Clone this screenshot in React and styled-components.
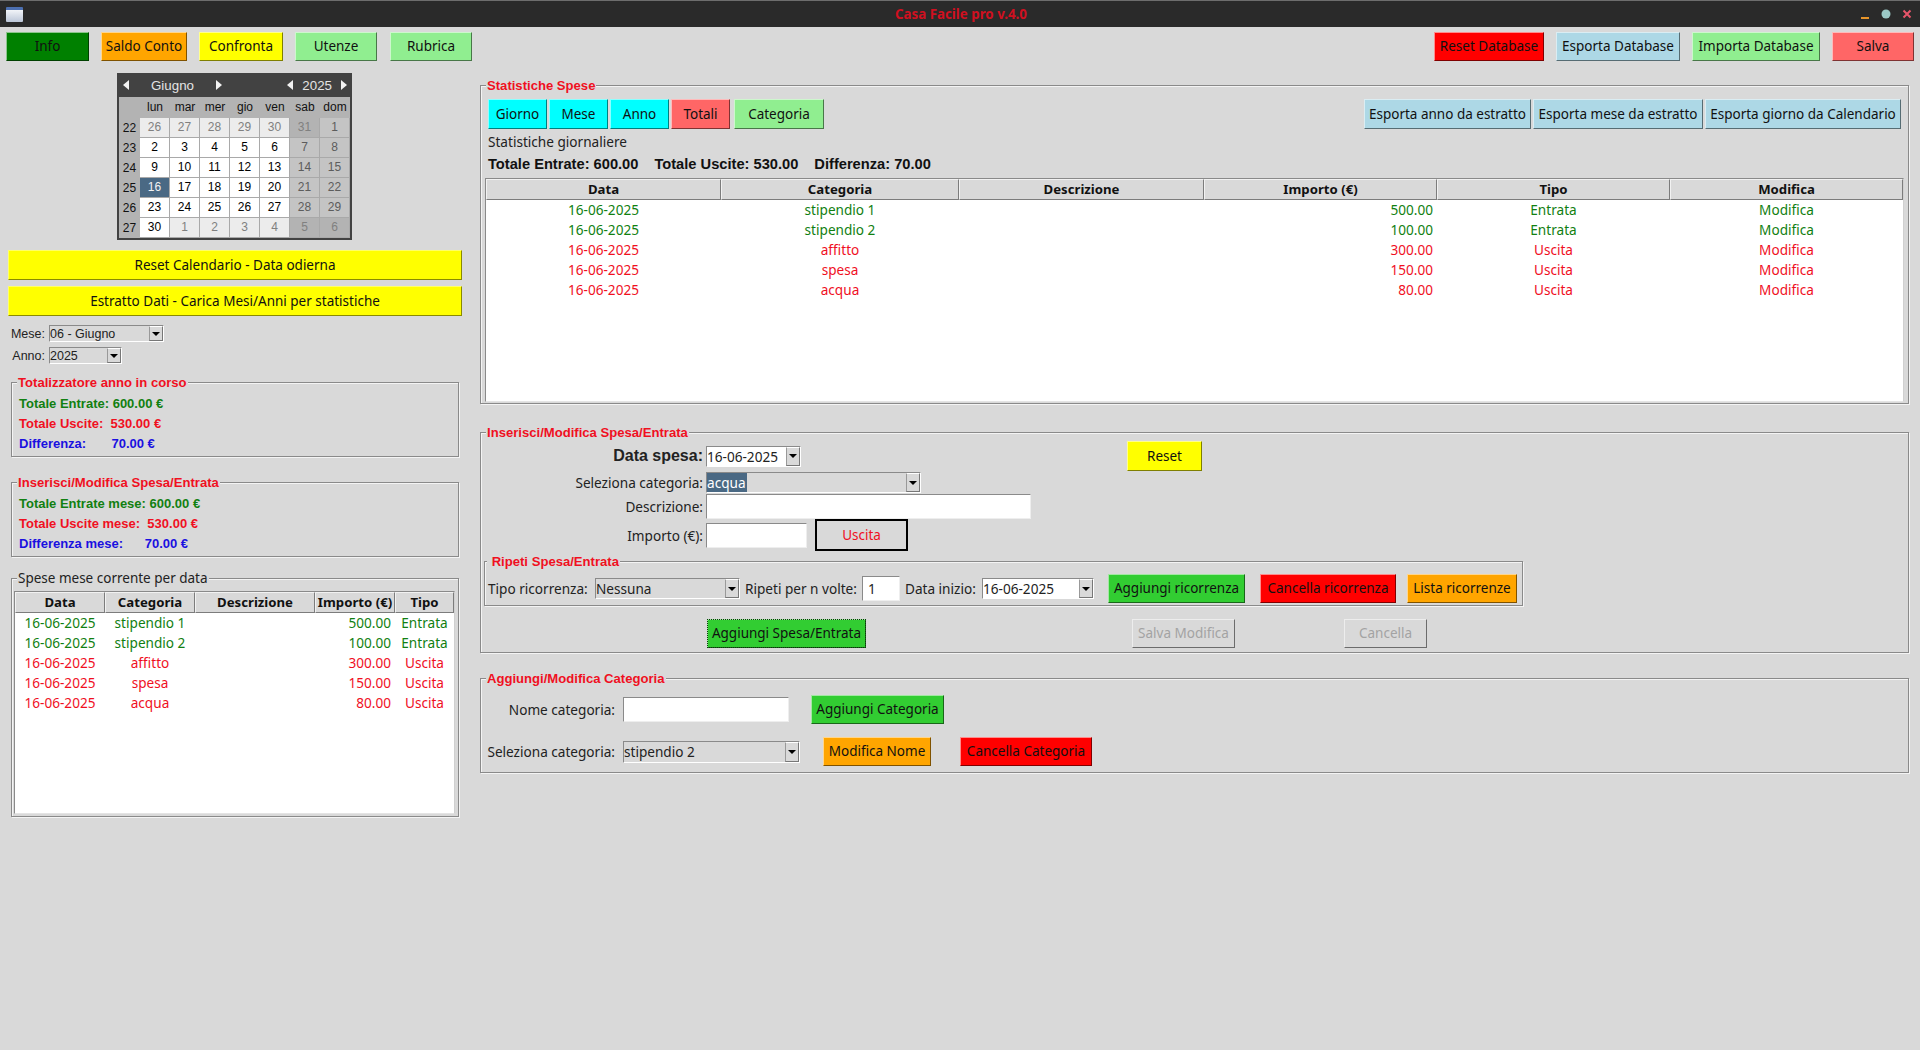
import React from "react";
import styled, { createGlobalStyle } from "styled-components";

const GREEN = "#118011";
const RED = "#f0101f";
const SANS = '"Noto Sans", sans-serif';
const ARIAL = '"Liberation Sans", Arial, sans-serif';

const Global = createGlobalStyle`
  html, body { margin: 0; padding: 0; background: #d9d9d9; }
  * { box-sizing: border-box; }
`;

const Page = styled.div`
  width: 1920px; height: 1050px; overflow: hidden; background: #d9d9d9;
  font-family: ${SANS}; font-size: 13.6px; color: #111;
`;
const TitleBar = styled.div`
  height: 27px; background: #2a2a2a; border-top: 1px solid #6d6d6d;
  display: flex; align-items: center; justify-content: space-between; padding: 0 6px; position: relative;
`;
const WinIcon = styled.div`
  width: 17px; height: 15px; border-radius: 1px;
  background: linear-gradient(#4c6fb0 0 3px, #f2f4f8 3px, #bcc6d8 100%);
`;
const Title = styled.div`
  position: absolute; left: 895px; top: 4px; font: bold 13.33px ${SANS}; color: #d01020;
`;
const Toolbar = styled.div`
  height: 39px; padding: 5px 6px 5px; display: flex; justify-content: space-between;
`;
const Group = styled.div`display: flex; gap: ${p => p.$gap || 12}px;`;
const Btn = styled.div`
  width: ${p => p.$w}px; height: ${p => p.$h || 29}px; flex: none;
  margin-left: ${p => p.$ml || 0}px;
  background: ${p => p.$bg || "#d9d9d9"};
  border: 1px solid; border-color: rgba(255,255,255,.55) rgba(0,0,0,.5) rgba(0,0,0,.5) rgba(255,255,255,.55);
  display: flex; align-items: center; justify-content: center;
  padding-bottom: ${p => (p.$h >= 30 ? 1 : 2)}px;
  font: 13.5px ${SANS}; color: ${p => p.$color || "#111"}; white-space: nowrap;
`;
const FocusBtn = styled(Btn)`
  outline: 1px dotted #0a3a0a; outline-offset: -1px;
`;
const OutlineBtn = styled(Btn)`
  border: 2px solid #000; height: 32px;
`;
const Main = styled.div`display: grid; grid-template-columns: 479px 1fr;`;
const Left = styled.div`display: flex; flex-direction: column; align-items: flex-start;`;
const Right = styled.div`display: flex; flex-direction: column; align-items: flex-start; padding-top: 19px;`;

const Cal = styled.div`
  margin: 7px 0 0 117px; width: 235px; height: 167px; background: #424242; padding: 0 2px 2px;
`;
const CalHead = styled.div`
  height: 24px; display: flex; align-items: center; color: #e4e4e4; font: 13.33px ${ARIAL};
`;
const CalMonth = styled.div`display: flex; align-items: center; justify-content: space-between; width: 103px; padding: 0 0 0 4px;`;
const CalYear = styled.div`display: flex; align-items: center; gap: 9px; margin-left: auto; padding-right: 3px;`;
const Arrow = styled.span`
  width: 0; height: 0; border-top: 5px solid transparent; border-bottom: 5px solid transparent;
  ${p => p.$dir === "l" ? "border-right: 6px solid #f2f2f2;" : "border-left: 6px solid #f2f2f2;"}
`;
const CalGrid = styled.div`
  display: grid; grid-template-columns: 21px repeat(7, 30px); grid-template-rows: 21px repeat(6, 20px);
  background: #b3b3b3; font: 12px ${ARIAL};
`;
const CalLabel = styled.div`display: flex; align-items: center; justify-content: center; color: #111; padding-bottom: ${p => p.$pb || 0}px;`;
const CalDay = styled.div`
  display: flex; align-items: center; justify-content: center; padding-bottom: 2px;
  background: ${p => p.$bg}; color: ${p => p.$color};
  border-right: 1px solid #a9a9a9; border-bottom: 1px solid #a9a9a9;
`;

const WideBtn = styled(Btn)`margin: ${p => p.$mt}px 0 0 8px; border-color: #ffff66 #8a8a00 #8a8a00 #ffff66;`;
const FieldRow = styled.div`
  display: flex; align-items: center; height: 17px; margin-top: ${p => p.$mt}px; font: 12.5px ${ARIAL}; color: #222;
`;
const FieldLabel = styled.div`width: 45px; text-align: right; margin-right: 4px;`;
const Combo = styled.div`
  width: ${p => p.$w}px; height: ${p => p.$h || 21}px; flex: none; margin-left: ${p => p.$ml || 0}px;
  display: flex; align-items: center; justify-content: space-between;
  background: ${p => p.$white ? "#fff" : "#d9d9d9"};
  border: 1px solid; border-color: #8a8a8a #fff #fff #8a8a8a;
  padding-left: 0; font: ${p => p.$arial ? `12.5px ${ARIAL}` : `13.6px ${SANS}`}; color: #222;
`;
const ComboBtn = styled.div`
  width: 14px; height: 100%; flex: none; background: #d9d9d9;
  border: 1px solid; border-color: #fff #777 #777 #999;
  display: flex; align-items: center; justify-content: center;
  &::after { content: ""; border-left: 4px solid transparent; border-right: 4px solid transparent; border-top: 4px solid #000; }
`;
const Selected = styled.span`background: #4a6984; color: #fff; padding: 0 1px 0 0;`;
const Entry = styled.div`
  width: ${p => p.$w}px; height: ${p => p.$h || 25}px; flex: none; margin-left: ${p => p.$ml || 0}px;
  background: #fff; border: 1px solid; border-color: #8a8a8a #eee #eee #8a8a8a;
  padding-left: 5px; display: flex; align-items: center; font: 13.6px ${SANS}; color: #222;
`;

const Frame = styled.div`
  position: relative; flex: none;
  width: ${p => p.$w}px; height: ${p => p.$h}px;
  margin: ${p => p.$m || 0};
  border: 1px solid #8a8a8a;
  box-shadow: inset 1px 1px 0 #f4f4f4, 1px 1px 0 #f4f4f4;
  padding: ${p => p.$pad || 0};
`;
const Legend = styled.div`
  position: absolute; left: ${p => p.$l ?? 5}px; top: ${p => p.$plain ? -9 : -8}px; padding: 0 1px; background: #d9d9d9;
  font: ${p => p.$plain ? `13.5px/16px ${SANS}` : `bold 13.1px/16px ${ARIAL}`};
  color: ${p => p.$plain ? "#222" : RED}; white-space: pre;
`;
const Stat = styled.div`
  height: 20px; font: bold 13px/20px ${ARIAL}; color: ${p => p.$c}; white-space: pre;
`;

const Tree = styled.div`
  width: ${p => p.$w}px; height: ${p => p.$h}px; background: #fff; margin: ${p => p.$m || 0};
  border: 1px solid; border-color: #8a8a8a #d0d0d0 #e4e4e4 #8a8a8a;
  display: flex; flex-direction: column;
`;
const TreeRow = styled.div`
  display: grid; grid-template-columns: ${p => p.$cols}; height: ${p => p.$head ? 21 : 20}px; flex: none;
`;
const TH = styled.div`
  background: #d9d9d9; border: 1px solid; border-color: #f2f2f2 #7c7c7c #7c7c7c #f2f2f2;
  display: flex; align-items: center; justify-content: center; padding-bottom: 1px;
  font: bold 13.2px ${SANS}; color: #111; white-space: nowrap;
`;
const TD = styled.div`
  display: flex; align-items: center; padding: 0 ${p => p.$right ? 4 : 0}px 1px 0;
  justify-content: ${p => p.$right ? "flex-end" : "center"};
  font: 13.6px ${SANS}; color: ${p => p.$c}; white-space: nowrap;
`;

const Row = styled.div`display: flex; align-items: ${p => p.$align || "center"}; height: ${p => p.$h}px; margin-top: ${p => p.$mt || 0}px; padding-left: ${p => p.$pl || 0}px;`;
const RowLabel = styled.div`
  width: ${p => p.$w}px; flex: none; text-align: right; white-space: nowrap; padding-right: ${p => p.$pr ?? 3}px;
  font: ${p => p.$big ? `bold 16px ${ARIAL}` : `13.6px ${SANS}`}; color: #222;
`;
const Text = styled.div`
  width: ${p => p.$w ? `${p.$w}px` : "auto"}; flex: none;
  margin-left: ${p => p.$ml || 0}px; white-space: nowrap; color: #222; font: 13.6px ${SANS};
`;
const Caption = styled(Text)`margin-top: 3px; line-height: 20px;`;
const BoldTotals = styled.div`
  display: flex; gap: 16px; font: bold 14.67px ${ARIAL}; color: #111; height: 22px; align-items: center;
  margin: 1px 0 0 7px; white-space: nowrap;
`;
const ExportGroup = styled(Group)`margin-left: auto; margin-right: 7px;`;
const WinButtons = styled.svg`margin-right: 2px;`;

const rows = [
  ["16-06-2025", "stipendio 1", "500.00", "Entrata", GREEN],
  ["16-06-2025", "stipendio 2", "100.00", "Entrata", GREEN],
  ["16-06-2025", "affitto", "300.00", "Uscita", RED],
  ["16-06-2025", "spesa", "150.00", "Uscita", RED],
  ["16-06-2025", "acqua", "80.00", "Uscita", RED],
];

const weeks = [
  [22, [26,27,28,29,30,31,1]],
  [23, [2,3,4,5,6,7,8]],
  [24, [9,10,11,12,13,14,15]],
  [25, [16,17,18,19,20,21,22]],
  [26, [23,24,25,26,27,28,29]],
  [27, [30,1,2,3,4,5,6]],
];

function dayStyle(wi, di) {
  const weekend = di >= 5;
  const other = (wi === 0 && di < 6) || (wi === 5 && di > 0);
  if (wi === 3 && di === 0) return { bg: "#4a6984", color: "#f2f2f2" };
  if (other && weekend) return { bg: "#b3b3b3", color: "#808080" };
  if (other) return { bg: "#ececec", color: "#808080" };
  if (weekend) return { bg: "#c4c4c4", color: "#5c5c5c" };
  return { bg: "#fff", color: "#000" };
}

function Calendar() {
  return (
    <Cal>
      <CalHead>
        <CalMonth>
          <Arrow $dir="l" />
          <span>Giugno</span>
          <Arrow $dir="r" />
        </CalMonth>
        <CalYear>
          <Arrow $dir="l" />
          <span>2025</span>
          <Arrow $dir="r" />
        </CalYear>
      </CalHead>
      <CalGrid>
        <CalLabel />
        {["lun","mar","mer","gio","ven","sab","dom"].map(d => <CalLabel key={d} $pb={2}>{d}</CalLabel>)}
        {weeks.map(([w, days], wi) => (
          <React.Fragment key={w}>
            <CalLabel>{w}</CalLabel>
            {days.map((d, di) => {
              const s = dayStyle(wi, di);
              return <CalDay key={di} $bg={s.bg} $color={s.color}>{d}</CalDay>;
            })}
          </React.Fragment>
        ))}
      </CalGrid>
    </Cal>
  );
}

const leftCols = "90px 90px 120px 80px 1fr";
const rightCols = "235px 238px 245px 233px 233px 1fr";

function LeftTree() {
  return (
    <Tree $w={441} $h={223} $m="12px 0 0 2px">
      <TreeRow $head $cols={leftCols}>
        {["Data","Categoria","Descrizione","Importo (€)","Tipo"].map(h => <TH key={h}>{h}</TH>)}
      </TreeRow>
      {rows.map((r, i) => (
        <TreeRow key={i} $cols={leftCols}>
          <TD $c={r[4]}>{r[0]}</TD>
          <TD $c={r[4]}>{r[1]}</TD>
          <TD />
          <TD $c={r[4]} $right>{r[2]}</TD>
          <TD $c={r[4]}>{r[3]}</TD>
        </TreeRow>
      ))}
    </Tree>
  );
}

function RightTree() {
  return (
    <Tree $w={1419} $h={224} $m="3px 0 0 4px">
      <TreeRow $head $cols={rightCols}>
        {["Data","Categoria","Descrizione","Importo (€)","Tipo","Modifica"].map(h => <TH key={h}>{h}</TH>)}
      </TreeRow>
      {rows.map((r, i) => (
        <TreeRow key={i} $cols={rightCols}>
          <TD $c={r[4]}>{r[0]}</TD>
          <TD $c={r[4]}>{r[1]}</TD>
          <TD />
          <TD $c={r[4]} $right>{r[2]}</TD>
          <TD $c={r[4]}>{r[3]}</TD>
          <TD $c={r[4]}>Modifica</TD>
        </TreeRow>
      ))}
    </Tree>
  );
}

export default function App() {
  return (
    <Page>
      <Global />
      <TitleBar>
        <WinIcon />
        <Title>Casa Facile pro v.4.0</Title>
        <WinButtons width="58" height="14" viewBox="0 0 58 14">
          <rect x="7" y="10" width="8" height="2" fill="#e8952a" />
          <circle cx="32" cy="7" r="4.5" fill="#9cc9c6" />
          <path d="M49.5 3.5l7 7M56.5 3.5l-7 7" stroke="#e8556a" strokeWidth="2" />
        </WinButtons>
      </TitleBar>
      <Toolbar>
        <Group $gap={12}>
          <Btn $w={83} $bg="#008000">Info</Btn>
          <Btn $w={86} $bg="#ffa500">Saldo Conto</Btn>
          <Btn $w={84} $bg="#ffff00">Confronta</Btn>
          <Btn $w={82} $bg="#90ee90">Utenze</Btn>
          <Btn $w={82} $ml={1} $bg="#90ee90">Rubrica</Btn>
        </Group>
        <Group $gap={12}>
          <Btn $w={110} $bg="#ff0000">Reset Database</Btn>
          <Btn $w={124} $bg="#add8e6">Esporta Database</Btn>
          <Btn $w={128} $bg="#90ee90">Importa Database</Btn>
          <Btn $w={82} $bg="#ff6666">Salva</Btn>
        </Group>
      </Toolbar>
      <Main>
        <Left>
          <Calendar />
          <WideBtn $w={454} $h={30} $mt={10} $bg="#ffff00">Reset Calendario - Data odierna</WideBtn>
          <WideBtn $w={454} $h={30} $mt={6} $bg="#ffff00">Estratto Dati - Carica Mesi/Anni per statistiche</WideBtn>
          <FieldRow $mt={9}>
            <FieldLabel>Mese:</FieldLabel>
            <Combo $w={115} $h={17} $arial>06 - Giugno<ComboBtn /></Combo>
          </FieldRow>
          <FieldRow $mt={5}>
            <FieldLabel>Anno:</FieldLabel>
            <Combo $w={73} $h={17} $arial>2025<ComboBtn /></Combo>
          </FieldRow>
          <Frame $w={448} $h={75} $m="18px 0 0 11px" $pad="11px 0 0 7px">
            <Legend>Totalizzatore anno in corso</Legend>
            <Stat $c={GREEN}>Totale Entrate: 600.00 €</Stat>
            <Stat $c={RED}>Totale Uscite:  530.00 €</Stat>
            <Stat $c="#1a10e0">Differenza:       70.00 €</Stat>
          </Frame>
          <Frame $w={448} $h={75} $m="25px 0 0 11px" $pad="11px 0 0 7px">
            <Legend>Inserisci/Modifica Spesa/Entrata</Legend>
            <Stat $c={GREEN}>Totale Entrate mese: 600.00 €</Stat>
            <Stat $c={RED}>Totale Uscite mese:  530.00 €</Stat>
            <Stat $c="#1a10e0">Differenza mese:      70.00 €</Stat>
          </Frame>
          <Frame $w={448} $h={239} $m="21px 0 0 11px">
            <Legend $plain>Spese mese corrente per data</Legend>
            <LeftTree />
          </Frame>
        </Left>
        <Right>
          <Frame $w={1429} $h={319} $m="0 0 0 1px" $pad="13px 0 0 0">
            <Legend>Statistiche Spese</Legend>
            <Row $h={30} $pl={7} $align="flex-start">
              <Group $gap={2}>
                <Btn $w={59} $h={30} $bg="#00ffff">Giorno</Btn>
                <Btn $w={59} $h={30} $bg="#00ffff">Mese</Btn>
                <Btn $w={59} $h={30} $bg="#00ffff">Anno</Btn>
                <Btn $w={59} $h={30} $bg="#ff6666">Totali</Btn>
                <Btn $w={90} $h={30} $ml={2} $bg="#90ee90">Categoria</Btn>
              </Group>
              <ExportGroup $gap={2}>
                <Btn $w={167} $h={30} $bg="#add8e6">Esporta anno da estratto</Btn>
                <Btn $w={170} $h={30} $bg="#add8e6">Esporta mese da estratto</Btn>
                <Btn $w={196} $h={30} $bg="#add8e6">Esporta giorno da Calendario</Btn>
              </ExportGroup>
            </Row>
            <Caption $ml={7}>Statistiche giornaliere</Caption>
            <BoldTotals>
              <span>Totale Entrate: 600.00</span>
              <span>Totale Uscite: 530.00</span>
              <span>Differenza: 70.00</span>
            </BoldTotals>
            <RightTree />
          </Frame>

          <Frame $w={1429} $h={221} $m="28px 0 0 1px" $pad="8px 0 0 0">
            <Legend>Inserisci/Modifica Spesa/Entrata</Legend>
            <Row $h={30}>
              <RowLabel $w={225} $big>Data spesa:</RowLabel>
              <Combo $w={95} $white>16-06-2025<ComboBtn /></Combo>
              <Btn $w={75} $h={30} $ml={326} $bg="#ffff00">Reset</Btn>
            </Row>
            <Row $h={21} $mt={1}>
              <RowLabel $w={225}>Seleziona categoria:</RowLabel>
              <Combo $w={215}><Selected>acqua</Selected><ComboBtn /></Combo>
            </Row>
            <Row $h={25} $mt={1}>
              <RowLabel $w={225}>Descrizione:</RowLabel>
              <Entry $w={325} />
            </Row>
            <Row $h={32} $mt={0}>
              <RowLabel $w={225}>Importo (€):</RowLabel>
              <Entry $w={101} />
              <OutlineBtn $w={93} $ml={8} $h={32} $color={RED}>Uscita</OutlineBtn>
            </Row>
            <Frame $w={1039} $h={45} $m="10px 0 0 3px" $pad="10px 0 0 3px">
              <Legend $l={2}> Ripeti Spesa/Entrata</Legend>
              <Row $h={33}>
                <Text $w={107}>Tipo ricorrenza:</Text>
                <Combo $w={145}>Nessuna<ComboBtn /></Combo>
                <Text $ml={5} $w={117}>Ripeti per n volte:</Text>
                <Entry $w={38}>1</Entry>
                <Text $ml={5} $w={77}>Data inizio:</Text>
                <Combo $w={112} $white>16-06-2025<ComboBtn /></Combo>
                <Btn $w={137} $ml={14} $bg="#32cd32">Aggiungi ricorrenza</Btn>
                <Btn $w={136} $ml={15} $bg="#ff0000">Cancella ricorrenza</Btn>
                <Btn $w={110} $ml={11} $bg="#ffa500">Lista ricorrenze</Btn>
              </Row>
            </Frame>
            <Row $h={29} $mt={13}>
              <FocusBtn $w={159} $ml={226} $bg="#32cd32">Aggiungi Spesa/Entrata</FocusBtn>
              <Btn $w={103} $ml={266} $color="#a3a3a3">Salva Modifica</Btn>
              <Btn $w={83} $ml={109} $color="#a3a3a3">Cancella</Btn>
            </Row>
          </Frame>

          <Frame $w={1429} $h={95} $m="25px 0 0 1px" $pad="16px 0 0 0">
            <Legend>Aggiungi/Modifica Categoria</Legend>
            <Row $h={29}>
              <RowLabel $w={134} $pr={0}>Nome categoria:</RowLabel>
              <Entry $w={166} $ml={8} />
              <Btn $w={133} $ml={22} $bg="#32cd32">Aggiungi Categoria</Btn>
            </Row>
            <Row $h={29} $mt={13}>
              <RowLabel $w={134} $pr={0}>Seleziona categoria:</RowLabel>
              <Combo $w={177} $h={22} $ml={8}>stipendio 2<ComboBtn /></Combo>
              <Btn $w={108} $ml={23} $bg="#ffa500">Modifica Nome</Btn>
              <Btn $w={132} $ml={29} $bg="#ff0000">Cancella Categoria</Btn>
            </Row>
          </Frame>
        </Right>
      </Main>
    </Page>
  );
}
